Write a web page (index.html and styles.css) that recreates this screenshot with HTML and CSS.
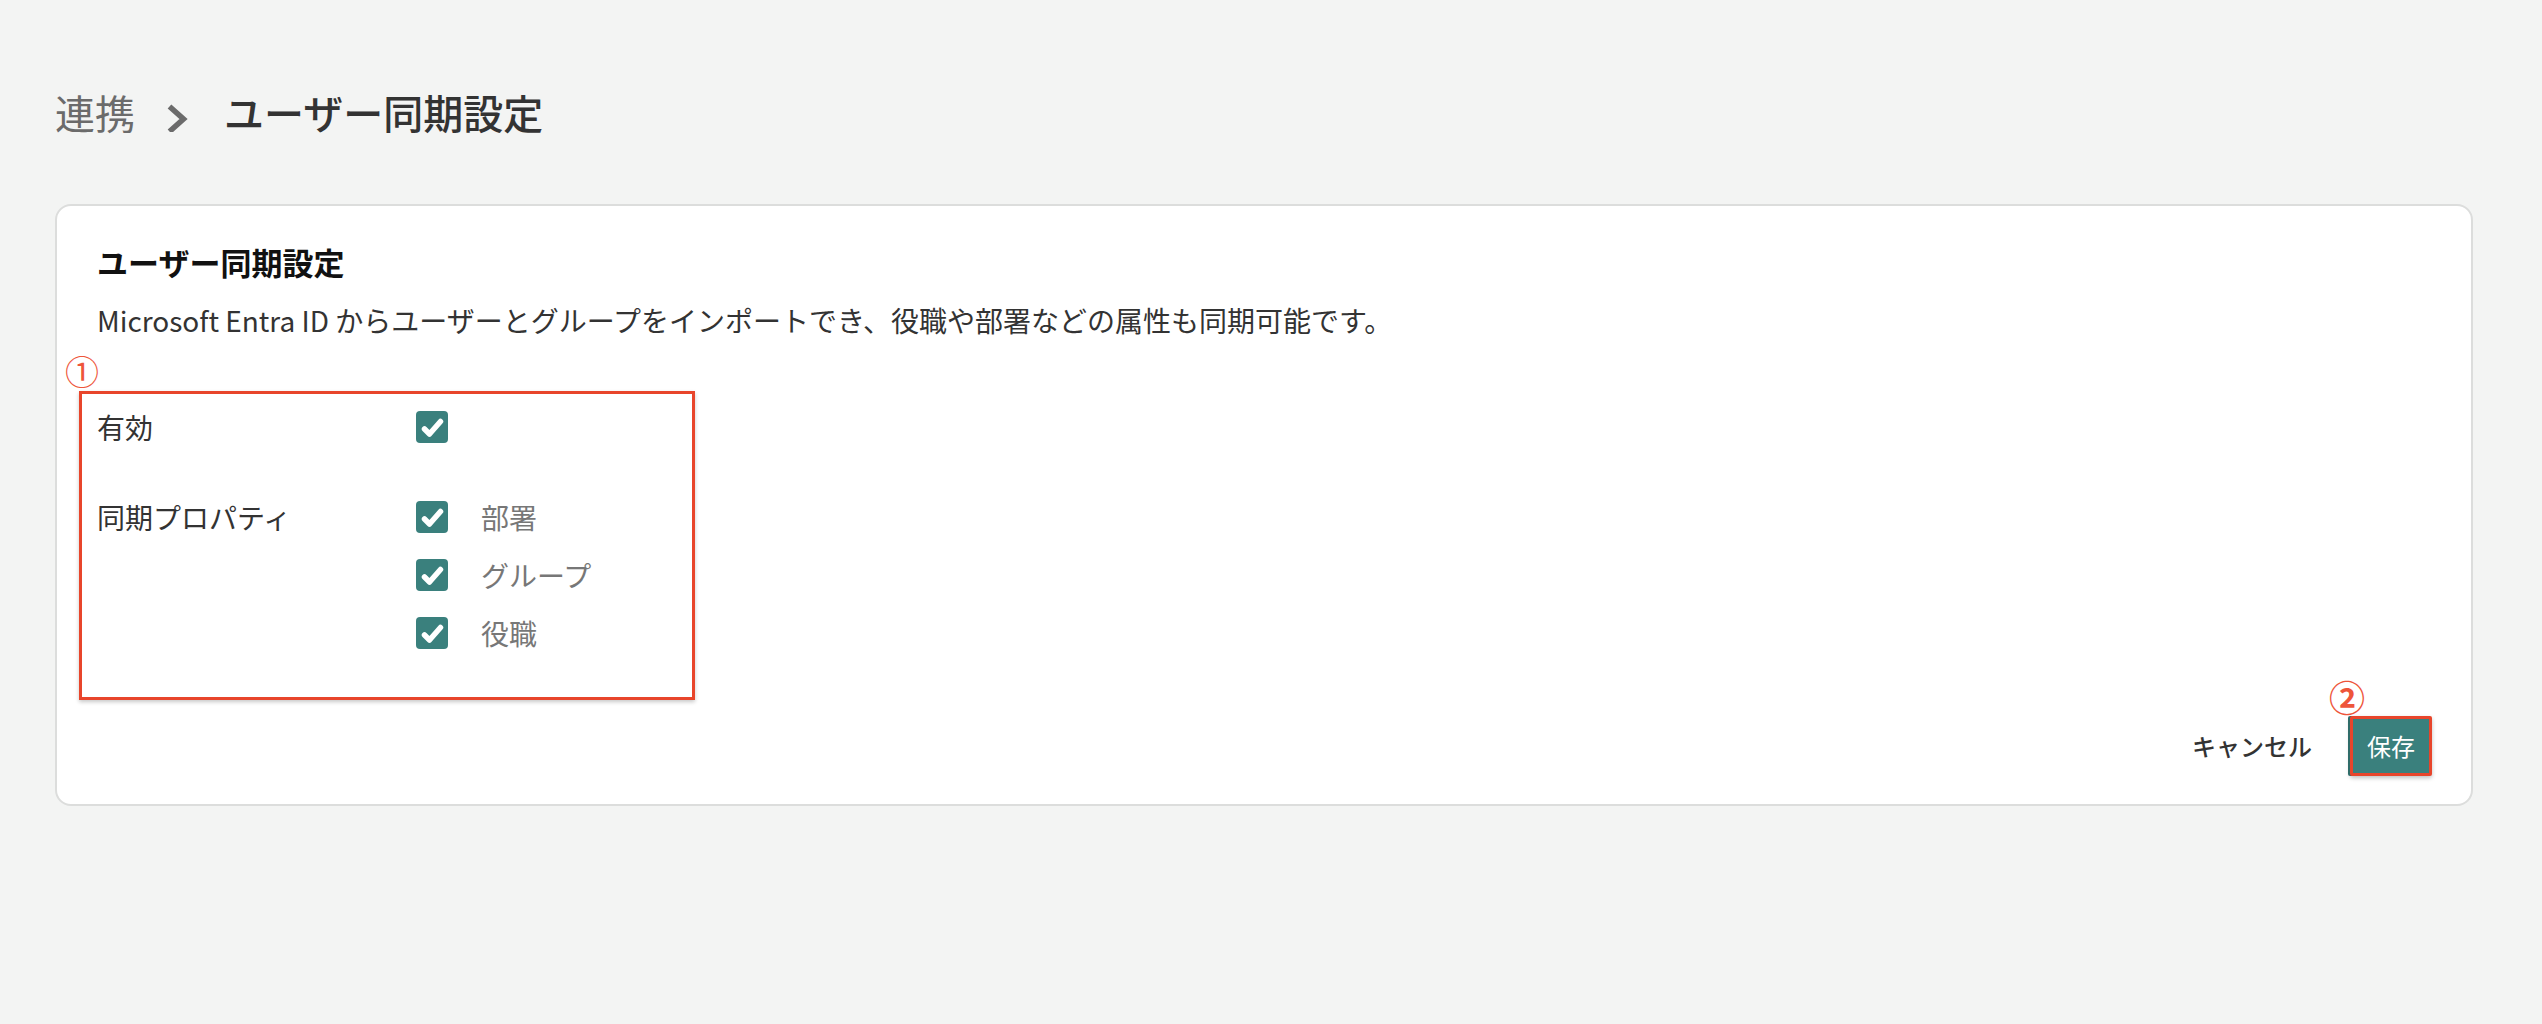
FILE: index.html
```html
<!DOCTYPE html>
<html lang="ja">
<head>
<meta charset="utf-8">
<title>ユーザー同期設定</title>
<link rel="stylesheet" href="styles.css">
</head>
<body>
<div class="page">
  <nav class="breadcrumb">
    <span class="crumb-parent">連携</span>
    <svg class="crumb-sep" width="28" height="40" viewBox="0 0 28 40" aria-hidden="true"><path d="M6.5 14.5 L20.5 27 L6.5 39.5" fill="none" stroke="#6b6b6b" stroke-width="5.5"/></svg>
    <h1 class="crumb-current">ユーザー同期設定</h1>
  </nav>

  <section class="card">
    <h2 class="card-title">ユーザー同期設定</h2>
    <p class="card-desc">Microsoft Entra ID からユーザーとグループをインポートでき、役職や部署などの属性も同期可能です。</p>
    <div class="annot annot-1">①</div>
    <div class="highlight">
      <div class="form-row">
        <div class="form-label">有効</div>
        <div class="form-control">
          <label class="check">
            <span class="box"><svg width="32" height="32" viewBox="0 0 32 32"><path d="M8.5 18 L13.5 23 L24.5 10.5" fill="none" stroke="#fff" stroke-width="5.5" stroke-linecap="round" stroke-linejoin="round"/></svg></span>
          </label>
        </div>
      </div>
      <div class="form-row">
        <div class="form-label">同期プロパティ</div>
        <div class="form-control check-list">
          <label class="check">
            <span class="box"><svg width="32" height="32" viewBox="0 0 32 32"><path d="M8.5 18 L13.5 23 L24.5 10.5" fill="none" stroke="#fff" stroke-width="5.5" stroke-linecap="round" stroke-linejoin="round"/></svg></span>
            <span class="check-text">部署</span>
          </label>
          <label class="check">
            <span class="box"><svg width="32" height="32" viewBox="0 0 32 32"><path d="M8.5 18 L13.5 23 L24.5 10.5" fill="none" stroke="#fff" stroke-width="5.5" stroke-linecap="round" stroke-linejoin="round"/></svg></span>
            <span class="check-text">グループ</span>
          </label>
          <label class="check">
            <span class="box"><svg width="32" height="32" viewBox="0 0 32 32"><path d="M8.5 18 L13.5 23 L24.5 10.5" fill="none" stroke="#fff" stroke-width="5.5" stroke-linecap="round" stroke-linejoin="round"/></svg></span>
            <span class="check-text">役職</span>
          </label>
        </div>
      </div>
    </div>

    <div class="card-footer">
      <button class="btn-cancel" type="button">キャンセル</button>
      <div class="save-wrap">
        <span class="annot annot-2">②</span>
        <button class="btn-save" type="button">保存</button>
      </div>
    </div>
  </section>
</div>
</body>
</html>
```

FILE: styles.css
```css
* { box-sizing: border-box; }

body {
  margin: 0;
  background: #f3f4f3;
  font-family: "Noto Sans CJK JP", "Noto Sans", sans-serif;
  color: #333;
}

.page {
  padding: 84px 69px 0 55px;
}

.breadcrumb {
  display: flex;
  align-items: center;
  height: 56px;
  font-size: 40px;
  line-height: 56px;
}

.crumb-parent {
  color: #6b6b6b;
}

.crumb-sep {
  margin: 0 33px 0 28px;
  flex: none;
}

.crumb-current {
  margin: 0;
  font-size: 40px;
  font-weight: 500;
  color: #333;
}

.card {
  margin-top: 64px;
  background: #fff;
  border: 2px solid #dcdddc;
  border-radius: 16px;
  padding: 33px 39px 28px 40px;
}

.card-title {
  margin: 0;
  font-size: 31px;
  line-height: 46px;
  font-weight: 700;
  color: #111;
}

.card-desc {
  margin: 14px 0 0;
  font-size: 28px;
  line-height: 42px;
  color: #333;
}

.annot {
  color: #ee553a;
}

.annot-1 {
  margin: 9px 0 0 -32px;
  font-size: 34px;
  line-height: 41px;
}

.highlight {
  width: 616px;
  margin-left: -18px;
  border: 3px solid #e8452b;
  padding: 17px 15px 48px;
  box-shadow: 0 2px 4px rgba(0, 0, 0, 0.22);
}

.form-row {
  display: flex;
  align-items: flex-start;
}

.form-row + .form-row {
  margin-top: 58px;
}

.form-label {
  width: 319px;
  flex: none;
  font-size: 28px;
  line-height: 32px;
  color: #333;
}

.check-list {
  display: flex;
  flex-direction: column;
  gap: 26px;
}

.check {
  display: flex;
  align-items: center;
  gap: 33px;
  font-size: 28px;
  line-height: 32px;
  color: #777;
}

.box {
  display: block;
  width: 32px;
  height: 32px;
  border-radius: 4px;
  background: #3a807d;
}

.box svg {
  display: block;
}

.card-footer {
  margin-top: 16px;
  display: flex;
  justify-content: flex-end;
  align-items: center;
  gap: 38px;
}

.btn-cancel {
  background: none;
  border: 0;
  padding: 0;
  font-family: inherit;
  font-size: 24px;
  line-height: 32px;
  font-weight: 500;
  color: #333;
}

.save-wrap {
  position: relative;
}

.annot-2 {
  position: absolute;
  left: -21px;
  top: -38px;
  font-size: 36px;
  line-height: 36px;
  font-weight: 700;
  white-space: nowrap;
}

.btn-save {
  display: block;
  width: 82px;
  height: 60px;
  padding: 0;
  border: 3px solid #e8452b;
  border-radius: 2px;
  background: #3a807d;
  color: #fff;
  font-family: inherit;
  font-size: 24px;
  line-height: 32px;
  box-shadow: -2px 0 0 #2f6c69, 0 2px 4px rgba(0, 0, 0, 0.25);
}
```
